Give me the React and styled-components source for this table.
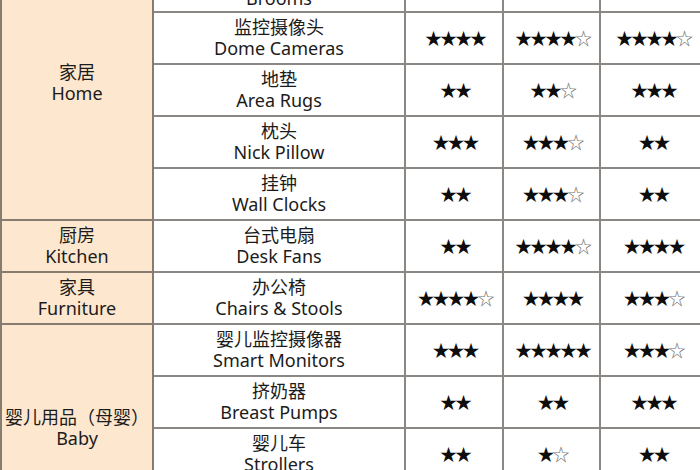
import styled, { createGlobalStyle } from "styled-components";

const GlobalStyle = createGlobalStyle`
  html, body {
    margin: 0;
    padding: 0;
    background: #ffffff;
  }
  body {
    overflow: hidden;
  }
`;

const Frame = styled.div`
  width: 700px;
  height: 470px;
  overflow: hidden;
`;

const Table = styled.table`
  border-collapse: collapse;
  table-layout: fixed;
  width: 704px;
  margin-top: -37px;
  font-family: "Noto Sans", "Noto Sans CJK SC", sans-serif;
  font-size: 18px;
  line-height: 21px;
  color: #1b1b1b;
`;

const Row = styled.tr`
  height: ${(p) => p.$h || 52}px;
`;

const Cell = styled.td`
  border: 2px solid #8a8784;
  text-align: center;
  vertical-align: middle;
  padding: 0;
  white-space: nowrap;
`;

const GroupCell = styled(Cell)`
  background: #fde7cf;
  border-color: #877c70;
  padding-bottom: ${(p) => p.$lift || 0}px;
`;

const Line = styled.div`
  display: block;
`;

const StarText = styled.span`
  font-family: "Noto Sans CJK SC", sans-serif;
  font-size: 17px;
  letter-spacing: -2px;
  margin-right: -2px;
  color: #0d0d0d;
`;

const Hollow = styled.span`
  color: #6e6e6e;
`;

const groups = [
  {
    zh: "家居",
    en: "Home",
    lift: 18,
    items: [
      { zh: "扫把", en: "Brooms", s: [[3, 0], [3, 0], [3, 0]], h: 48 },
      { zh: "监控摄像头", en: "Dome Cameras", s: [[4, 0], [4, 1], [4, 1]] },
      { zh: "地垫", en: "Area Rugs", s: [[2, 0], [2, 1], [3, 0]] },
      { zh: "枕头", en: "Nick Pillow", s: [[3, 0], [3, 1], [2, 0]] },
      { zh: "挂钟", en: "Wall Clocks", s: [[2, 0], [3, 1], [2, 0]] },
    ],
  },
  {
    zh: "厨房",
    en: "Kitchen",
    items: [{ zh: "台式电扇", en: "Desk Fans", s: [[2, 0], [4, 1], [4, 0]] }],
  },
  {
    zh: "家具",
    en: "Furniture",
    items: [{ zh: "办公椅", en: "Chairs & Stools", s: [[4, 1], [4, 0], [3, 1]] }],
  },
  {
    zh: "婴儿用品（母婴）",
    en: "Baby",
    items: [
      { zh: "婴儿监控摄像器", en: "Smart Monitors", s: [[3, 0], [5, 0], [3, 1]] },
      { zh: "挤奶器", en: "Breast Pumps", s: [[2, 0], [2, 0], [3, 0]] },
      { zh: "婴儿车", en: "Strollers", s: [[2, 0], [1, 1], [2, 0]] },
      { zh: "婴儿床", en: "Cribs", s: [[2, 0], [2, 0], [2, 0]] },
    ],
  },
];

const Stars = ({ full, empty }) => (
  <StarText>
    {"★".repeat(full)}
    {empty > 0 && <Hollow>{"☆".repeat(empty)}</Hollow>}
  </StarText>
);

const App = () => {
  return (
    <Frame>
      <GlobalStyle />
      <Table>
        <colgroup>
          <col style={{ width: 152 }} />
          <col style={{ width: 252 }} />
          <col style={{ width: 98 }} />
          <col style={{ width: 97 }} />
          <col style={{ width: 105 }} />
        </colgroup>
        <tbody>
          {groups.map((g) =>
            g.items.map((item, i) => (
              <Row key={g.en + item.en} $h={item.h}>
                {i === 0 && (
                  <GroupCell rowSpan={g.items.length} $lift={g.lift}>
                    <Line>{g.zh}</Line>
                    <Line>{g.en}</Line>
                  </GroupCell>
                )}
                <Cell>
                  <Line>{item.zh}</Line>
                  <Line>{item.en}</Line>
                </Cell>
                {item.s.map(([full, empty], k) => (
                  <Cell key={k}>
                    <Stars full={full} empty={empty} />
                  </Cell>
                ))}
              </Row>
            ))
          )}
        </tbody>
      </Table>
    </Frame>
  );
};

export default App;
